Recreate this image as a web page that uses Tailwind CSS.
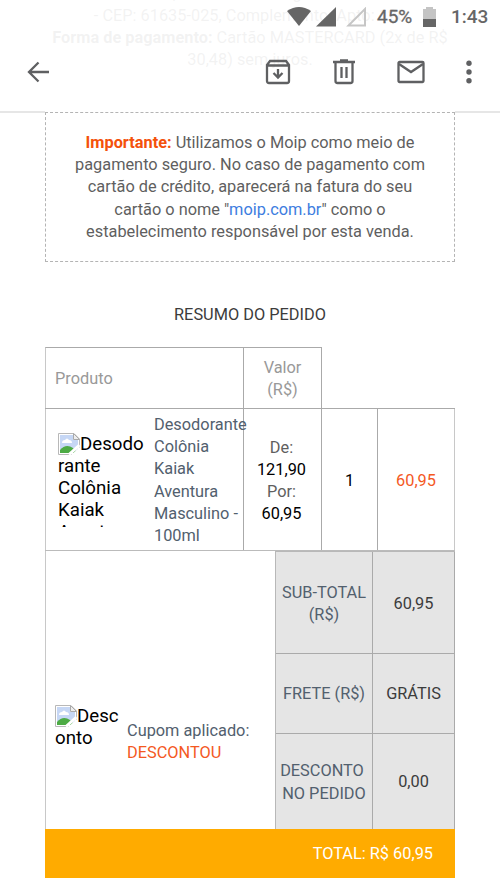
<!DOCTYPE html>
<html lang="pt-BR">
<head>
<meta charset="utf-8">
<title>Resumo do pedido</title>
<script src="https://cdn.jsdelivr.net/npm/@tailwindcss/browser@4"></script>
</head>
<body class="bg-white">
<svg class="hidden">
  <symbol id="broken" viewBox="0 0 22 22">
    <path d="M.5.5H16L21.500 6V21.500H.5Z" fill="#fff" stroke="#b8b8b8"/>
    <path d="M2 2H15V7H20V20H2Z" fill="#c6d7f5"/>
    <path d="M4 10Q4 7 7 7Q9 4 11 7Q14 7 14 10Z" fill="#fff"/>
    <path d="M2 20V17Q8 10 15 15L20 20Z" fill="#4dab45"/>
    <path d="M13 22L22 14V22Z" fill="#fff"/>
    <path d="M11 21.500L21.500 12" stroke="#fff" stroke-width="3"/>
    <path d="M15.500.5V6.500H21.500Z" fill="#eee" stroke="#aaa"/>
  </symbol>
</svg>
<div class="relative w-[500px] h-[889px] overflow-hidden bg-white font-[Roboto,sans-serif] text-[16.340px] leading-[22.200px] text-[#5f5f5f] whitespace-nowrap">
  <header class="absolute inset-x-0 top-0 z-10 h-[113px] bg-white/92 border-b-2 border-[#e6e6e6] text-[#666] [clip-path:polygon(0_0,100%_0,100%_100%,455px_100%,455px_111px,45px_111px,45px_100%,0_100%)]">
    <div class="flex h-[34px] items-center pl-[287px] font-medium text-[19px]">
      <svg class="w-[24px] h-[20px] shrink-0" viewBox="0 0 24 20" fill="#666"><path d="M0 4Q12-4 24 4L12 19Z"/></svg>
      <svg class="w-[20px] h-[20px] ml-[5px] shrink-0" viewBox="0 0 20 20" fill="#666"><path d="M0 19.500H20V0Z"/></svg>
      <svg class="w-[20px] h-[20px] ml-[10px] shrink-0" viewBox="0 0 20 20" fill="none" stroke="#c6c6c6" stroke-width="2"><path d="M2.500 18.500H19V2Z"/></svg>
      <span class="ml-[11px] w-[46px] font-normal [-webkit-text-stroke:0.300px_#666]">45%</span>
      <svg class="w-[13px] h-[20px] shrink-0" viewBox="0 0 13 20"><path d="M3 0H10V2H13V12H0V2H3Z" fill="#c4c4c4"/><path d="M0 12H13V20H0Z" fill="#666"/></svg>
      <span class="ml-[15px]">1:43</span>
    </div>
    <div class="flex h-[76px] items-center pl-[26px] text-[#5f6062]">
      <svg class="w-[24px] h-[24px]" viewBox="0 0 24 24" fill="none" stroke="currentColor" stroke-width="2.300"><path d="M23 12H3M12.500 2.500L3 12L12.500 21.500"/></svg>
      <svg class="w-[26px] h-[26px] ml-[215px]" viewBox="0 0 26 26" fill="none" stroke="currentColor" stroke-width="2.300"><path d="M2 6L5 2H21L24 6V22Q24 24 22 24H4Q2 24 2 22ZM2 6.500H24M13 10V18M8.500 14L13 18.500L17.500 14"/></svg>
      <svg class="w-[24px] h-[26px] ml-[41px]" viewBox="0 0 24 26" fill="none" stroke="currentColor" stroke-width="2.300"><path d="M1 3H23M8 1.500H16M3.500 3V22Q3.500 24 5.500 24H18.500Q20.500 24 20.500 22V3M9.500 8V19M14.500 8V19"/></svg>
      <svg class="w-[28px] h-[24px] ml-[41px]" viewBox="0 0 28 24" fill="none" stroke="currentColor" stroke-width="2.300"><rect x="1.500" y="2" width="25" height="20" rx="1"/><path d="M2 4L14 12L26 4"/></svg>
      <svg class="w-[6px] h-[24px] ml-[41px]" viewBox="0 0 6 24" fill="currentColor"><circle cx="3" cy="3.300" r="2.700"/><circle cx="3" cy="12" r="2.700"/><circle cx="3" cy="20.700" r="2.700"/></svg>
    </div>
  </header>

  <main class="mx-[45px]">
    <div class="mt-[-17.500px] h-[129.500px] text-center">
      <p>CE, Maracanaú - Jaguaribe</p>
      <p>- CEP: 61635-025, Complemento: Apto: 120</p>
      <p><b>Forma de pagamento:</b> Cartão MASTERCARD (2x de R$</p>
      <p>30,48) sem juros.</p>
    </div>
    <section class="h-[150px] border border-dashed border-[#b4b4b4] pt-[19px] text-center">
      <p><b class="text-[#f4510b]">Importante:</b> Utilizamos o Moip como meio de</p>
      <p>pagamento seguro. No caso de pagamento com</p>
      <p>cartão de crédito, aparecerá na fatura do seu</p>
      <p>cartão o nome "<a class="text-[#3d7de0]">moip.com.br</a>" como o</p>
      <p>estabelecimento responsável por esta venda.</p>
    </section>
    <h1 class="mt-[42px] h-[43px] text-center text-[#3c3c3c]">RESUMO DO PEDIDO</h1>

    <div class="flex h-[61px] text-[#999]">
      <div class="flex w-[199px] items-center border border-b-0 border-[#aaa] border-l-[#c8c8c8] pl-[9px] pt-[2px]">Produto</div>
      <div class="flex w-[78px] items-center justify-center border-t border-r border-[#aaa] pt-[2px] text-center">Valor<br>(R$)</div>
    </div>
    <div class="flex h-[143px] border-y border-[#aaa] border-b-[#bbb]">
      <div class="flex w-[199px] border-x border-[#aaa] border-l-[#c8c8c8] pl-[12px]">
        <div class="mt-[23.500px] h-[94.500px] w-[96px] shrink-0 overflow-hidden text-[18.700px] text-black">
          <div class="flex"><svg class="w-[22px] h-[22px] shrink-0"><use href="#broken"/></svg>Desodo</div>
          <p>rante</p><p>Colônia</p><p>Kaiak</p><p>Aventura</p>
        </div>
        <div class="relative z-10 mt-[5px] text-[#52606e]">Desodorante<br>Colônia<br>Kaiak<br>Aventura<br>Masculino -<br>100ml</div>
      </div>
      <div class="flex w-[78px] items-center justify-center border-r border-[#aaa] text-center"><p class="pt-[3px] pr-[2px]">De:<br><span class="text-black">121,90</span><br>Por:<br><span class="text-black">60,95</span></p></div>
      <div class="flex w-[56px] items-center justify-center border-r border-[#aaa] pt-[3px] text-black">1</div>
      <div class="flex w-[77px] items-center justify-center border-r border-[#c8c8c8] pt-[3px] text-[#f4591f]">60,95</div>
    </div>
    <div class="flex h-[278px]">
      <div class="flex w-[230px] border-l border-[#c8c8c8] pl-[9px]">
        <div class="mt-[153.500px] w-[72px] text-[18.700px] text-black">
          <div class="flex"><svg class="w-[22px] h-[22px] shrink-0"><use href="#broken"/></svg>Desc</div><p>onto</p>
        </div>
        <div class="mt-[168.500px] text-[#52606e]">Cupom aplicado:<br><span class="text-[#f4591f]">DESCONTOU</span></div>
      </div>
      <div class="grid w-[180px] grid-cols-[97px_82px] grid-rows-[102px_80px_95px] bg-[#e5e5e5] text-center text-[#3c3c3c] border-t border-l border-[#b8b8b8]">
        <div class="flex items-center justify-center border-r border-b border-[#aaa] pt-[3px] text-[#52606e]">SUB-TOTAL<br>(R$)</div>
        <div class="flex items-center justify-center border-r border-b border-[#aaa] pt-[3px]">60,95</div>
        <div class="flex items-center justify-center border-r border-b border-[#aaa] pt-[2px] text-[#52606e]">FRETE (R$)</div>
        <div class="flex items-center justify-center border-r border-b border-[#aaa] pt-[2px]">GRÁTIS</div>
        <div class="flex flex-col items-center justify-center border-r border-[#aaa] pt-[2px] text-[#52606e]"><p class="pr-[4px]">DESCONTO</p><p>NO PEDIDO</p></div>
        <div class="flex items-center justify-center border-r border-[#aaa] pt-[2px]">0,00</div>
      </div>
    </div>
    <div class="flex h-[49px] items-center justify-end bg-[#ffab00] pt-[2px] pr-[22px] text-white">TOTAL: R$ 60,95</div>
  </main>
</div>
</body>
</html>
